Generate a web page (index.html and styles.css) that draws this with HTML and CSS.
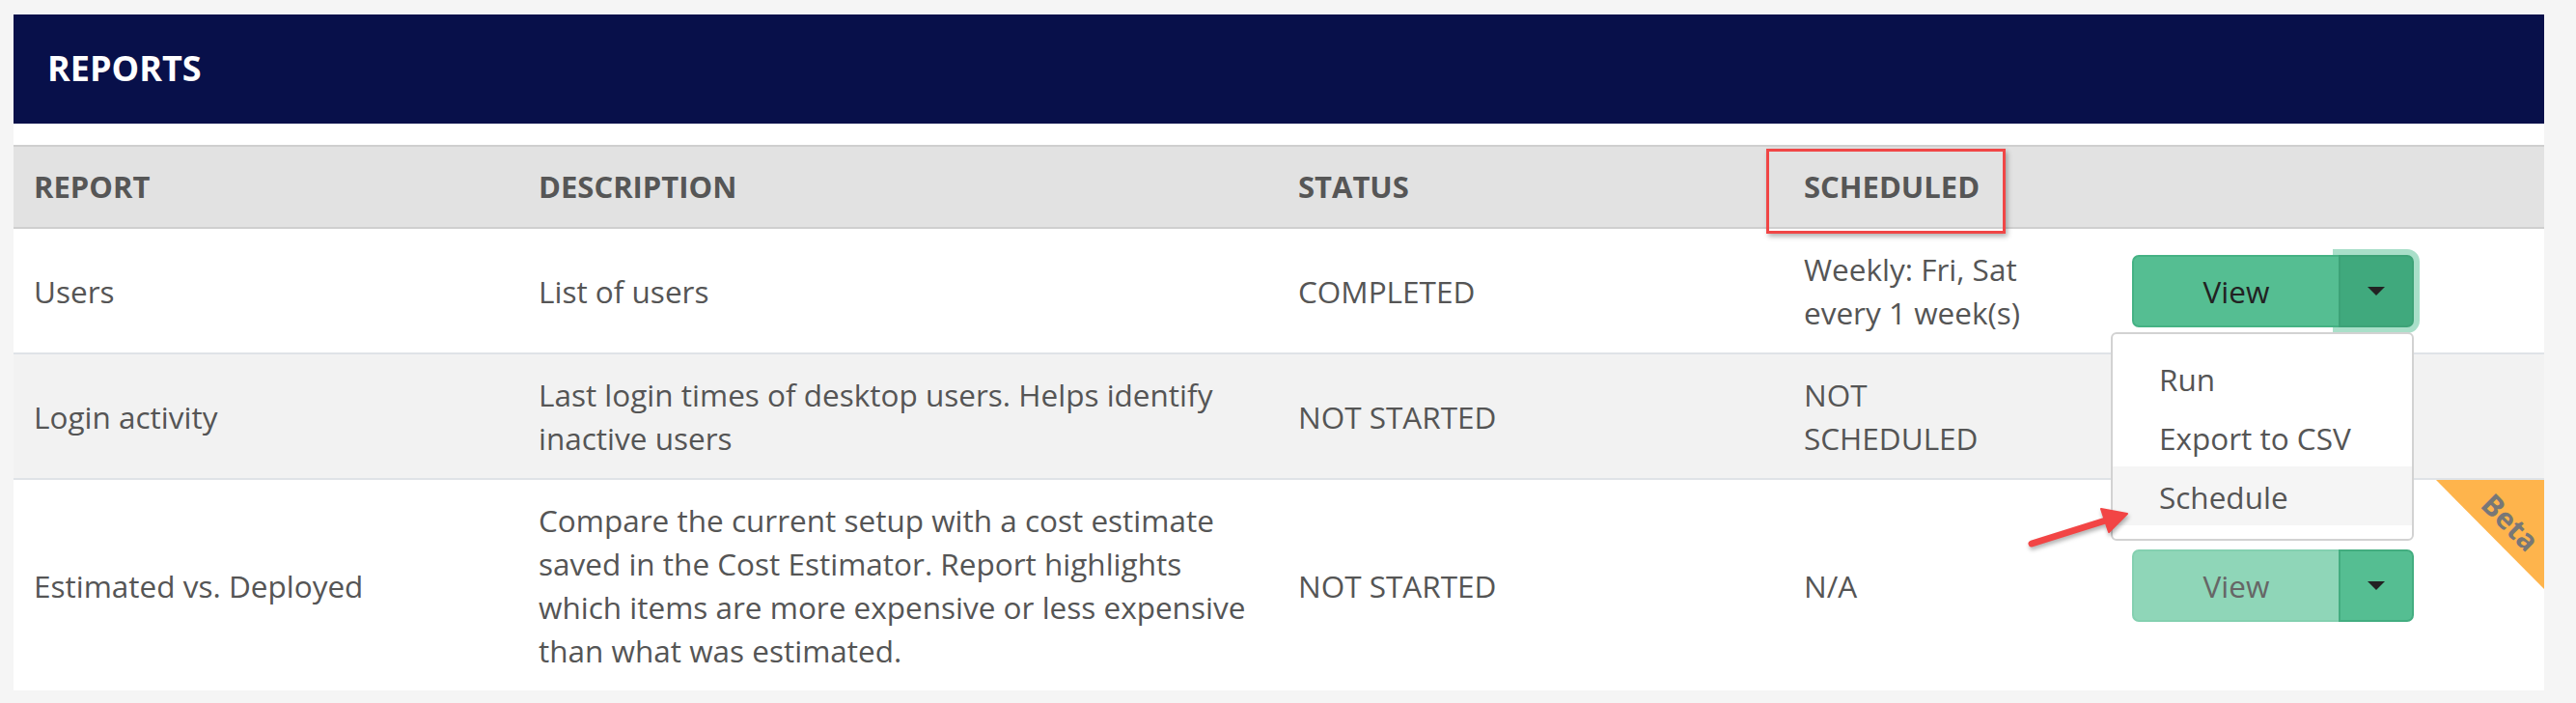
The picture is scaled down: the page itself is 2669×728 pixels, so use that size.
FILE: index.html
```html
<!DOCTYPE html>
<html lang="en">
<head>
<meta charset="utf-8">
<title>Reports</title>
<link rel="stylesheet" href="styles.css">
</head>
<body>
<div class="page">
  <section class="panel">
    <header class="panel-head">REPORTS</header>
    <div class="table">
      <div class="row thead">
        <div class="cell">REPORT</div>
        <div class="cell">DESCRIPTION</div>
        <div class="cell">STATUS</div>
        <div class="cell cell-callout">SCHEDULED<span class="callout"></span></div>
        <div class="cell"></div>
      </div>

      <div class="row">
        <div class="cell">Users</div>
        <div class="cell">List of users</div>
        <div class="cell">COMPLETED</div>
        <div class="cell"><div class="sched">Weekly: Fri, Sat<br>every 1 week(s)</div></div>
        <div class="cell">
          <div class="btn-group">
            <button class="btn btn-main">View</button>
            <button class="btn btn-caret focus"><span class="caret"></span></button>
            <div class="dropdown">
              <div class="dd-item">Run</div>
              <div class="dd-item">Export to CSV</div>
              <div class="dd-item hover">Schedule</div>
            </div>
          </div>
        </div>
      </div>

      <div class="row row-alt">
        <div class="cell">Login activity</div>
        <div class="cell">Last login times of desktop users. Helps identify inactive users</div>
        <div class="cell">NOT STARTED</div>
        <div class="cell"><div class="sched">NOT SCHEDULED</div></div>
        <div class="cell"></div>
      </div>

      <div class="row row-last">
        <div class="cell">Estimated vs. Deployed</div>
        <div class="cell">Compare the current setup with a cost estimate saved in the Cost Estimator. Report highlights which items are more expensive or less expensive than what was estimated.</div>
        <div class="cell">NOT STARTED</div>
        <div class="cell"><div class="sched">N/A</div></div>
        <div class="cell">
          <div class="btn-group">
            <button class="btn btn-main disabled">View</button>
            <button class="btn btn-caret soft"><span class="caret"></span></button>
          </div>
        </div>
        <div class="ribbon"><span class="ribbon-text">Beta</span></div>
        <svg class="arrow" width="140" height="60" viewBox="0 0 140 60">
          <line x1="25" y1="48" x2="108" y2="22" stroke="#f24545" stroke-width="7" stroke-linecap="round"/>
          <polygon points="124,17 97,12 105,36" fill="#f24545" stroke="#f24545" stroke-width="2" stroke-linejoin="round"/>
        </svg>
      </div>
    </div>
  </section>
</div>
</body>
</html>
```

FILE: styles.css
```css
* { box-sizing: border-box; }

html, body {
  margin: 0;
  padding: 0;
}

body {
  background: #f5f5f5;
  font-family: "Open Sans", "Noto Sans", "Liberation Sans", sans-serif;
  color: #555;
}

.page {
  padding: 15px 33px 13px 14px;
}

.panel {
  background: #fff;
  width: 2622px;
}

.panel-head {
  background: #08104a;
  color: #fff;
  font-weight: 700;
  font-size: 36px;
  line-height: 50px;
  padding: 31px 35px 32px;
}

.table {
  padding-top: 22px;
}

.row {
  display: grid;
  grid-template-columns: 523px 787px 524px 340px 448px;
  align-items: center;
  border-bottom: 2px solid #dfe3e7;
  position: relative;
  font-size: 31.5px;
  line-height: 45px;
}

.row-alt { background: #f2f2f2; }
.row-last { border-bottom: none; }

.cell {
  padding: 19px 21px;
}

.thead {
  background: #e2e2e2;
  border-top: 2px solid #cfcfcf;
  border-bottom: 2px solid #cfcfcf;
  font-weight: 700;
  font-size: 31px;
  line-height: 43px;
  color: #565656;
}

.thead .cell { padding: 20px 21px; }

.cell-callout { position: relative; }

.callout {
  position: absolute;
  left: -18px;
  top: 2px;
  width: 248px;
  height: 88px;
  border: 3px solid #f04646;
  box-shadow: 2px 3px 5px rgba(0, 0, 0, 0.3);
}

.sched { max-width: 236px; }

.btn-group {
  position: relative;
  display: flex;
  width: 292px;
  height: 75px;
}

.btn {
  font-family: inherit;
  font-size: 31.5px;
  height: 75px;
  margin: 0;
  padding: 0;
  cursor: pointer;
}

.btn-main {
  position: relative;
  z-index: 2;
  width: 214px;
  background: #55be92;
  border: 2px solid #45b284;
  border-right: none;
  border-radius: 7px 0 0 7px;
  color: #222;
}

.btn-main.disabled {
  background: #8fd6b8;
  border-color: #84d0b0;
  color: #666;
}

.btn-caret {
  position: relative;
  z-index: 1;
  width: 78px;
  background: #40a97d;
  border: 2px solid #3da277;
  border-radius: 0 7px 7px 0;
  display: flex;
  align-items: center;
  justify-content: center;
}

.btn-caret.focus {
  box-shadow: 0 0 0 6px #a9dfc9;
}

.btn-caret.soft {
  background: #55be92;
  border-color: #43ad80;
}

.caret {
  display: block;
  width: 0;
  height: 0;
  border-top: 9px solid #222;
  border-left: 9px solid transparent;
  border-right: 9px solid transparent;
}

.dropdown {
  position: absolute;
  top: 80px;
  right: 0;
  width: 314px;
  background: #fff;
  border: 2px solid #d2d2d2;
  border-radius: 6px;
  padding: 15px 0 14px;
  z-index: 5;
}

.dd-item {
  height: 61px;
  line-height: 63px;
  padding-left: 48px;
  font-size: 31.5px;
  color: #555;
}

.dd-item.hover { background: #f5f5f5; }

.ribbon {
  position: absolute;
  right: 0;
  top: 0;
  width: 112px;
  height: 113px;
  background: #feb44c;
  clip-path: polygon(0 0, 100% 0, 100% 100%);
}

.ribbon-text {
  position: absolute;
  left: 77px;
  top: 44px;
  transform: translate(-50%, -50%) rotate(45deg);
  font-weight: 700;
  font-size: 30px;
  line-height: 1;
  color: #777;
}

.arrow {
  position: absolute;
  left: 2066px;
  top: 18px;
  z-index: 6;
  filter: drop-shadow(1px 3px 2px rgba(0, 0, 0, 0.3));
}
```
